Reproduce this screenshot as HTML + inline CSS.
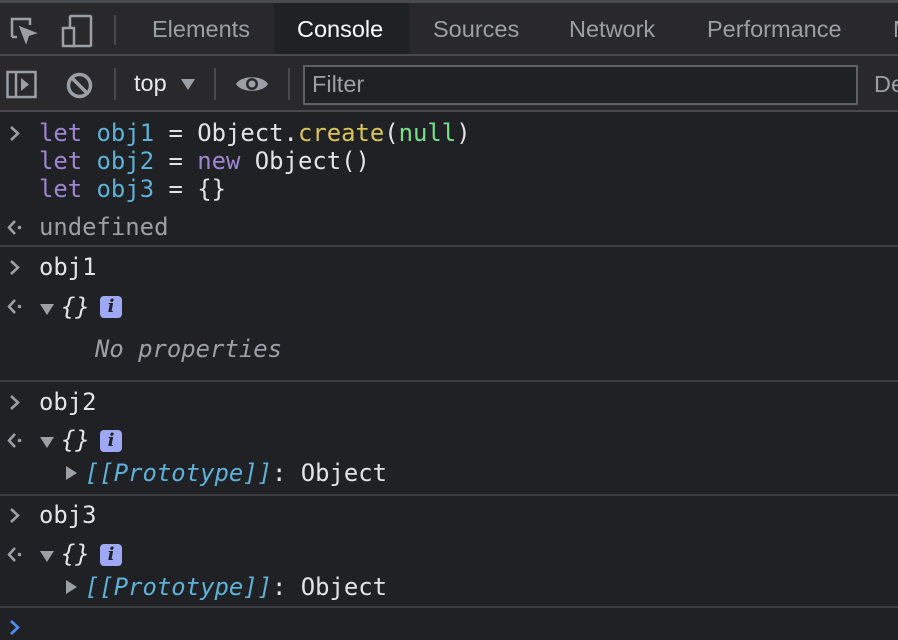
<!DOCTYPE html>
<html><head><meta charset="utf-8"><style>
*{margin:0;padding:0;box-sizing:border-box}
body{width:898px;height:640px;overflow:hidden;background:#202124;position:relative;font-family:"Liberation Sans",sans-serif}
.abs{position:absolute}
.tabs{left:0;top:0;width:898px;height:56px;background:#29292c;border-top:3px solid #4a4b4e;border-bottom:2px solid #4a4a4d}
.tab{position:absolute;top:13px;font-size:23.5px;color:#9aa0a6}
.tb{left:0;top:56px;width:898px;height:56px;background:#29292c;border-bottom:2px solid #4a4a4d}
.m{position:absolute;font-family:"DejaVu Sans Mono","Liberation Mono",monospace;font-size:23.9px;line-height:28px;white-space:pre;color:#e3e3e3}
.k{color:#9d87d2}.v{color:#5db0d7}.f{color:#d9c557}.n{color:#79e08a}.g{color:#9aa0a6}
.sep{position:absolute;left:0;width:898px;height:2px;background:#3c3d40}
.info{position:absolute;width:22px;height:22px;background:#9fa8f5;border-radius:4px;color:#202124;font:italic bold 18px "DejaVu Serif",serif;text-align:center;line-height:22px}
.tri{position:absolute;width:0;height:0;border-left:7px solid transparent;border-right:7px solid transparent;border-top:11px solid #9aa0a6}
.trr{position:absolute;width:0;height:0;border-top:7px solid transparent;border-bottom:7px solid transparent;border-left:11px solid #9aa0a6}
.vs{position:absolute;width:2px;background:#4a4a4d}
</style></head><body>
<div class="abs tabs">
<svg class="abs" style="left:8px;top:12px" width="32" height="32" viewBox="0 0 32 32" fill="none" stroke="#9aa0a6" stroke-width="2.5"><path d="M4 22V4h18v6"/><path d="M4 22h5"/><path d="M13 13l13 5-6 2-2 6z" fill="#9aa0a6"/></svg>
<svg class="abs" style="left:60px;top:10px" width="34" height="36" viewBox="0 0 34 36" fill="none" stroke="#9aa0a6" stroke-width="2.5"><rect x="10" y="3" width="21" height="30" rx="1"/><rect x="3" y="15" width="11" height="18" fill="#29292c"/></svg>
<div class="vs" style="left:114px;top:12px;height:30px"></div>
<div class="tab" style="left:152px">Elements</div>
<div class="abs" style="left:274px;top:0;width:136px;height:51px;background:#202124"></div>
<div class="tab" style="left:297px;color:#fff">Console</div>
<div class="tab" style="left:433px">Sources</div>
<div class="tab" style="left:569px">Network</div>
<div class="tab" style="left:707px">Performance</div>
<div class="tab" style="left:893px">M</div>
</div>
<div class="abs tb">
<svg class="abs" style="left:6px;top:14px" width="32" height="30" viewBox="0 0 32 30" fill="none" stroke="#9aa0a6" stroke-width="2.5"><rect x="1.5" y="2" width="28" height="25"/><path d="M10 2v25"/><path d="M15 8l8 6.5-8 6.5z" fill="#9aa0a6" stroke="none"/></svg>
<svg class="abs" style="left:66px;top:16px" width="27" height="27" viewBox="0 0 27 27" fill="none" stroke="#9aa0a6" stroke-width="3.5"><circle cx="13.5" cy="13.5" r="11"/><path d="M6 6l15 15"/></svg>
<div class="vs" style="left:114px;top:12px;height:32px"></div>
<div class="abs" style="left:134px;top:14px;font-size:23.5px;color:#e8eaed">top</div>
<div class="tri" style="left:181px;top:23px"></div>
<div class="vs" style="left:214px;top:12px;height:32px"></div>
<svg class="abs" style="left:235px;top:17px" width="34" height="22" viewBox="0 0 34 22"><path d="M1 11C6 2 28 2 33 11 28 20 6 20 1 11z" fill="#9aa0a6"/><circle cx="17" cy="11" r="6" fill="#29292c"/><circle cx="17" cy="11" r="3.5" fill="#9aa0a6"/></svg>
<div class="vs" style="left:288px;top:12px;height:32px"></div>
<div class="abs" style="left:303px;top:9px;width:555px;height:40px;background:#202124;border:2px solid #5f6063"></div>
<div class="abs" style="left:312px;top:15px;font-size:23.5px;color:#9aa0a6">Filter</div>
<div class="abs" style="left:874px;top:15px;font-size:23.5px;color:#9aa0a6">De</div>
</div>

<svg class="abs" style="left:0;top:0" width="40" height="640" fill="none" stroke-width="2.6">
<g stroke="#9aa0a6">
<path d="M11 127l7 6.5-7 6.5"/>
<path d="M11 261l7 6.5-7 6.5"/>
<path d="M11 396l7 6.5-7 6.5"/>
<path d="M11 509l7 6.5-7 6.5"/>
<path d="M15 221l-6 6.5 6 6.5"/>
<path d="M15 300l-6 6.5 6 6.5"/>
<path d="M15 434l-6 6.5 6 6.5"/>
<path d="M15 548l-6 6.5 6 6.5"/>
</g>
<g fill="#9aa0a6" stroke="none">
<circle cx="19.5" cy="227.5" r="1.8"/><circle cx="19.5" cy="306.5" r="1.8"/><circle cx="19.5" cy="440.5" r="1.8"/><circle cx="19.5" cy="554.5" r="1.8"/>
</g>
<path d="M11 621l7 6.5-7 6.5" stroke="#4d8ef7"/>
</svg>

<div class="m" style="left:39px;top:119px"><span class="k">let</span> <span class="v">obj1</span> = Object.<span class="f">create</span>(<span class="n">null</span>)
<span class="k">let</span> <span class="v">obj2</span> = <span class="k">new</span> Object()
<span class="k">let</span> <span class="v">obj3</span> = {}</div>
<div class="m g" style="left:39px;top:213px">undefined</div>
<div class="sep" style="top:245px"></div>

<div class="m" style="left:39px;top:253px">obj1</div>
<div class="tri" style="left:40px;top:304px"></div>
<div class="m" style="left:61px;top:293px;font-style:italic">{}</div>
<div class="info" style="left:100px;top:296px">i</div>
<div class="m g" style="left:95px;top:335px;font-style:italic">No properties</div>
<div class="sep" style="top:380px"></div>

<div class="m" style="left:39px;top:388px">obj2</div>
<div class="tri" style="left:40px;top:437px"></div>
<div class="m" style="left:61px;top:426px;font-style:italic">{}</div>
<div class="info" style="left:100px;top:430px">i</div>
<div class="trr" style="left:66px;top:466px"></div>
<div class="m" style="left:85px;top:459px"><span class="v" style="font-style:italic">[[Prototype]]</span>: Object</div>
<div class="sep" style="top:494px"></div>

<div class="m" style="left:39px;top:501px">obj3</div>
<div class="tri" style="left:40px;top:551px"></div>
<div class="m" style="left:61px;top:540px;font-style:italic">{}</div>
<div class="info" style="left:100px;top:544px">i</div>
<div class="trr" style="left:66px;top:580px"></div>
<div class="m" style="left:85px;top:573px"><span class="v" style="font-style:italic">[[Prototype]]</span>: Object</div>
<div class="sep" style="top:606px"></div>
</body></html>
